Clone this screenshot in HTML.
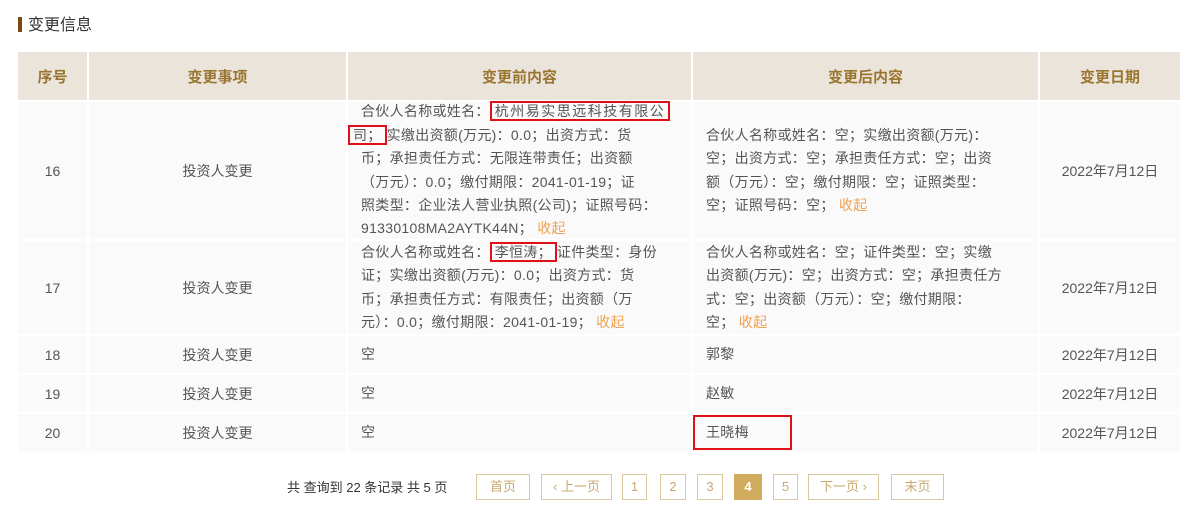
<!DOCTYPE html>
<html><head><meta charset="utf-8"><style>
body{margin:0;width:1200px;height:509px;background:#fff;font-family:"Liberation Sans","Noto Sans CJK SC",sans-serif;font-size:14px;color:#555;position:relative;overflow:hidden}
.a{position:absolute}
.title{left:18px;top:15px;font-size:16px;color:#333;line-height:22px}
.title:before{content:"";display:inline-block;width:4px;height:15px;background:#7a4a12;margin-right:6px;vertical-align:-2px}
.c{position:absolute;background:#fafafa;box-sizing:border-box;display:flex;align-items:center}
.h{background:#ebe4da;color:#9a7530;font-weight:bold;font-size:15px;justify-content:center}
.ctr{justify-content:center}
.t{padding-left:13px;line-height:23.4px;white-space:nowrap;letter-spacing:0.3px}
.r{border:2px solid #e0101a;padding:0 3px;margin:-2px 0}
.r1{letter-spacing:1.5px}
.o{color:#f0a050}
.b{position:absolute;top:474px;height:26px;border:1px solid #dcc8a0;box-sizing:border-box;color:#c9a870;text-align:center;line-height:24px;font-size:13px}
</style></head><body>
<div class="a title">变更信息</div>
<div class="c h" style="left:18px;top:52px;width:69px;height:48px">序号</div>
<div class="c h" style="left:89px;top:52px;width:257px;height:48px">变更事项</div>
<div class="c h" style="left:348px;top:52px;width:343px;height:48px">变更前内容</div>
<div class="c h" style="left:693px;top:52px;width:345px;height:48px">变更后内容</div>
<div class="c h" style="left:1040px;top:52px;width:140px;height:48px">变更日期</div>
<!-- row16 -->
<div class="c ctr" style="left:18px;top:102px;width:69px;height:137px">16</div>
<div class="c ctr" style="left:89px;top:102px;width:257px;height:137px">投资人变更</div>
<div class="c t" style="left:348px;top:102px;width:343px;height:137px"><div>合伙人名称或姓名：<span class="r r1">杭州易实思远科技有限公</span><br><span class="r" style="margin-left:-13px">司；</span>实缴出资额(万元)：0.0；出资方式：货<br>币；承担责任方式：无限连带责任；出资额<br>（万元）：0.0；缴付期限：2041-01-19；证<br>照类型：企业法人营业执照(公司)；证照号码：<br>91330108MA2AYTK44N；&nbsp;<span class="o">收起</span></div></div>
<div class="c t" style="left:693px;top:102px;width:345px;height:137px"><div>合伙人名称或姓名：空；实缴出资额(万元)：<br>空；出资方式：空；承担责任方式：空；出资<br>额（万元）：空；缴付期限：空；证照类型：<br>空；证照号码：空；&nbsp;<span class="o">收起</span></div></div>
<div class="c ctr" style="left:1040px;top:102px;width:140px;height:137px">2022年7月12日</div>
<!-- row17 -->
<div class="c ctr" style="left:18px;top:241px;width:69px;height:93px">17</div>
<div class="c ctr" style="left:89px;top:241px;width:257px;height:93px">投资人变更</div>
<div class="c t" style="left:348px;top:241px;width:343px;height:93px"><div>合伙人名称或姓名：<span class="r">李恒涛；</span>证件类型：身份<br>证；实缴出资额(万元)：0.0；出资方式：货<br>币；承担责任方式：有限责任；出资额（万<br>元）：0.0；缴付期限：2041-01-19；&nbsp;<span class="o">收起</span></div></div>
<div class="c t" style="left:693px;top:241px;width:345px;height:93px"><div>合伙人名称或姓名：空；证件类型：空；实缴<br>出资额(万元)：空；出资方式：空；承担责任方<br>式：空；出资额（万元）：空；缴付期限：<br>空；&nbsp;<span class="o">收起</span></div></div>
<div class="c ctr" style="left:1040px;top:241px;width:140px;height:93px">2022年7月12日</div>
<!-- row18 -->
<div class="c ctr" style="left:18px;top:336px;width:69px;height:37px">18</div>
<div class="c ctr" style="left:89px;top:336px;width:257px;height:37px">投资人变更</div>
<div class="c t" style="left:348px;top:336px;width:343px;height:37px">空</div>
<div class="c t" style="left:693px;top:336px;width:345px;height:37px">郭黎</div>
<div class="c ctr" style="left:1040px;top:336px;width:140px;height:37px">2022年7月12日</div>
<!-- row19 -->
<div class="c ctr" style="left:18px;top:375px;width:69px;height:37px">19</div>
<div class="c ctr" style="left:89px;top:375px;width:257px;height:37px">投资人变更</div>
<div class="c t" style="left:348px;top:375px;width:343px;height:37px">空</div>
<div class="c t" style="left:693px;top:375px;width:345px;height:37px">赵敏</div>
<div class="c ctr" style="left:1040px;top:375px;width:140px;height:37px">2022年7月12日</div>
<!-- row20 -->
<div class="c ctr" style="left:18px;top:414px;width:69px;height:38px">20</div>
<div class="c ctr" style="left:89px;top:414px;width:257px;height:38px">投资人变更</div>
<div class="c t" style="left:348px;top:414px;width:343px;height:38px">空</div>
<div class="c t" style="left:693px;top:414px;width:345px;height:38px">王晓梅</div>
<div class="c ctr" style="left:1040px;top:414px;width:140px;height:38px">2022年7月12日</div>
<div class="a" style="left:693px;top:415px;width:99px;height:35px;border:2px solid #e0101a;box-sizing:border-box"></div>
<!-- pagination -->
<div class="a" style="left:287px;top:479px;font-size:13px;color:#333;line-height:18px">共 查询到 22 条记录 共 5 页</div>
<div class="b" style="left:476px;width:54px">首页</div>
<div class="b" style="left:541px;width:71px">‹ 上一页</div>
<div class="b" style="left:622px;width:25px">1</div>
<div class="b" style="left:660px;width:26px">2</div>
<div class="b" style="left:697px;width:26px">3</div>
<div class="b" style="left:734px;width:28px;background:#d2ac5e;border-color:#d2ac5e;color:#fff;font-weight:bold">4</div>
<div class="b" style="left:773px;width:25px">5</div>
<div class="b" style="left:808px;width:71px">下一页 ›</div>
<div class="b" style="left:891px;width:53px">末页</div>
</body></html>
